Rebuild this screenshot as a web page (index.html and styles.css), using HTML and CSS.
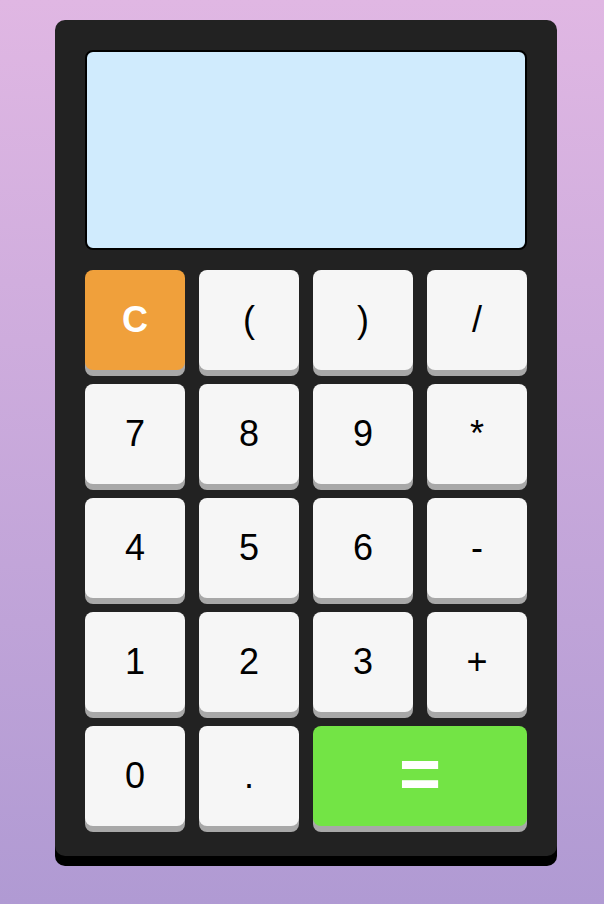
FILE: index.html
```html
<!DOCTYPE html>
<html>
<head>
<meta charset="utf-8">
<link rel="stylesheet" href="styles.css">
</head>
<body>
<div class="calc">
  <div class="display"></div>
  <div class="keys">
    <button class="key clear">C</button>
    <button class="key">(</button>
    <button class="key">)</button>
    <button class="key">/</button>
    <button class="key">7</button>
    <button class="key">8</button>
    <button class="key">9</button>
    <button class="key">*</button>
    <button class="key">4</button>
    <button class="key">5</button>
    <button class="key">6</button>
    <button class="key">-</button>
    <button class="key">1</button>
    <button class="key">2</button>
    <button class="key">3</button>
    <button class="key">+</button>
    <button class="key">0</button>
    <button class="key">.</button>
    <button class="key equals">=</button>
  </div>
</div>
</body>
</html>
```
FILE: styles.css
```css
html, body {
  margin: 0;
  padding: 0;
}
body {
  width: 604px;
  height: 904px;
  background: linear-gradient(to bottom, #e0b7e3, #b09ad3);
  font-family: "Liberation Sans", Arial, sans-serif;
  padding-top: 20px;
  box-sizing: border-box;
}
.calc {
  width: 502px;
  margin-left: 55px;
  box-sizing: border-box;
  padding: 30px;
  background: #222222;
  border-radius: 10px;
  box-shadow: 0 10px 0 #000;
}
.display {
  height: 200px;
  box-sizing: border-box;
  background: #d0ebfd;
  border: 2px solid #000;
  border-radius: 8px;
  margin-bottom: 20px;
}
.keys {
  display: grid;
  grid-template-columns: repeat(4, 100px);
  grid-auto-rows: 100px;
  gap: 14px;
}
.key {
  border: none;
  margin: 0;
  padding: 0;
  background: #f6f6f6;
  border-radius: 8px;
  box-shadow: 0 6px 0 #a8a8a8;
  font-family: "Liberation Sans", Arial, sans-serif;
  font-size: 36px;
  color: #000;
  display: flex;
  align-items: center;
  justify-content: center;
}
.clear {
  background: #f0a03b;
  color: #fff;
  font-weight: bold;
}
.equals {
  grid-column: span 2;
  background: #73e445;
  color: #fff;
  font-weight: bold;
  font-size: 72px;
  padding-bottom: 6px;
}
```
